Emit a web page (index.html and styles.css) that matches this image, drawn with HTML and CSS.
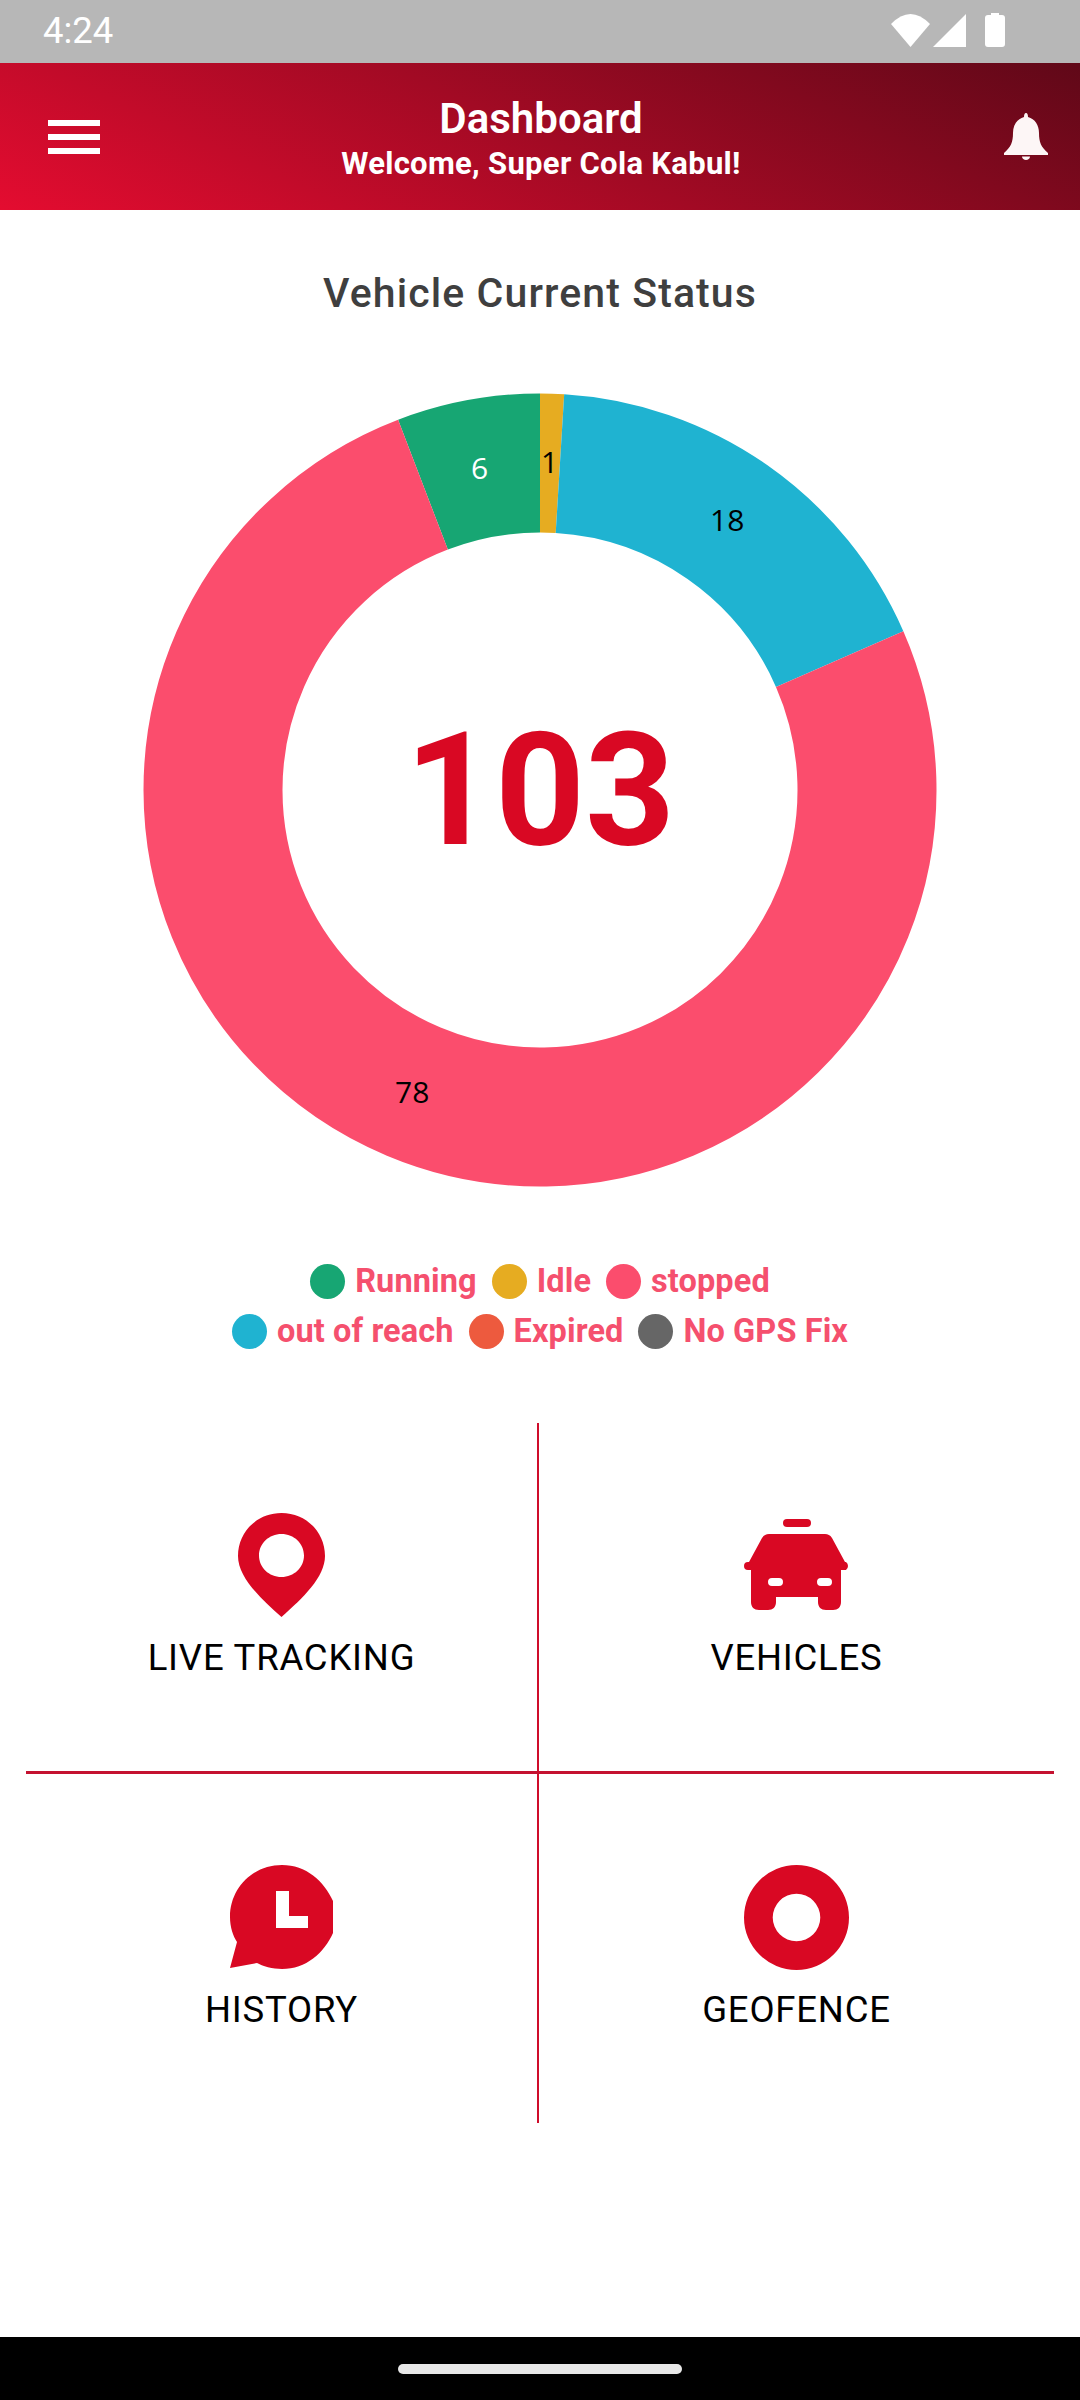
FILE: index.html
```html
<!DOCTYPE html>
<html lang="en">
<head>
  <meta charset="UTF-8" />
  <meta name="viewport" content="width=device-width, initial-scale=1.0" />
  <title>Dashboard</title>
  <link rel="stylesheet" href="styles.css">
</head>
<body>
  <div class="status-bar">
    <span class="status-time">4:24</span>
    <svg class="status-icons" width="75" height="33" viewBox="0 0 75 33">
      <path d="M0 10Q19.500-10 39 10L19.500 33z" fill="#fff"/>
      <path d="M42 33 75 0V33z" fill="#fff"/>
    </svg>
    <svg class="status-battery" width="20" height="34" viewBox="0 0 20 34">
      <path d="M6 0h8v2h3a3 3 0 0 1 3 3v26a3 3 0 0 1-3 3H3a3 3 0 0 1-3-3V5a3 3 0 0 1 3-3h3z" fill="#fff"/>
    </svg>
  </div>

  <header class="app-header">
    <div class="menu-icon"><span></span><span></span><span></span></div>
    <div class="header-texts">
      <h1>Dashboard</h1>
      <p>Welcome, Super Cola Kabul!</p>
    </div>
    <svg class="bell-icon" width="44" height="47" viewBox="0 0 44 47">
      <path d="M22 0c1.500 0 2 2 2 4 7 2 11 8 11 16 0 9 2 14 9 20v2H0v-2c7-6 9-11 9-20C9 12 13 6 20 4c0-2 .5-4 2-4z" fill="#fdf6f6"/>
      <path d="M18 43.500h8c0 2-2 3.500-4 3.500s-4-1.500-4-3.500z" fill="#fdf6f6"/>
    </svg>
  </header>

  <main class="content">
    <h2 class="chart-title">Vehicle Current Status</h2>

    <div class="chart">
      <svg width="794" height="794" viewBox="0 0 794 794">
        <g fill="none" stroke-width="139">
          <path stroke="#17a673" d="M279.970 91.660A327 327 0 0 1 397 70"/>
          <path stroke="#e6ac21" d="M397 70A327 327 0 0 1 416.940 70.610"/>
          <path stroke="#1fb3d1" d="M416.940 70.610A327 327 0 0 1 696.660 266.100"/>
          <path stroke="#fb4d6d" d="M696.660 266.100A327 327 0 1 1 279.970 91.660"/>
        </g>
      </svg>
      <span class="chart-total">103</span>
      <span class="slice-label label-green">6</span>
      <span class="slice-label label-yellow">1</span>
      <span class="slice-label label-blue">18</span>
      <span class="slice-label label-pink">78</span>
    </div>

    <div class="legend">
      <div class="legend-row">
        <div class="legend-item"><i class="dot dot-running"></i>Running</div>
        <div class="legend-item"><i class="dot dot-idle"></i>Idle</div>
        <div class="legend-item"><i class="dot dot-stopped"></i>stopped</div>
      </div>
      <div class="legend-row">
        <div class="legend-item"><i class="dot dot-reach"></i>out of reach</div>
        <div class="legend-item"><i class="dot dot-expired"></i>Expired</div>
        <div class="legend-item"><i class="dot dot-nogps"></i>No GPS Fix</div>
      </div>
    </div>

    <div class="menu-grid">
      <div class="menu-cell cell-tl">
        <div class="cell-icon">
          <svg width="90" height="106" viewBox="0 0 90 106">
            <path fill-rule="evenodd" d="M44.500 1C69 1 88 20 88 44c0 21-22 42-43.500 61C23 86 1 65 1 44 1 20 20 1 44.500 1zm0 21C32 22 22 31.500 22 43.500S32 65 44.500 65 67 55.500 67 43.500 57 22 44.500 22z" fill="#d90823"/>
          </svg>
        </div>
        <span>LIVE TRACKING</span>
      </div>
      <div class="menu-cell cell-tr">
        <div class="cell-icon">
          <svg width="106" height="92" viewBox="0 0 106 92">
            <rect x="39" y="0" width="28" height="8" rx="4" fill="#d90823"/>
            <path fill-rule="evenodd" d="M25 15h56c3 0 5 1 7 4l13 24h1a5 5 0 0 1 0 8h-5v32c0 5-3 8-8 8H82c-5 0-8-3-8-8V78H32v5c0 5-3 8-8 8H15c-5 0-8-3-8-8V51H4a4 4 0 0 1 0-8h1l13-24c2-3 4-4 7-4zM28 59a4 4 0 0 0 0 8h7a4 4 0 0 0 0-8zm49 0a4 4 0 0 0 0 8h7a4 4 0 0 0 0-8z" fill="#d90823"/>
          </svg>
        </div>
        <span>VEHICLES</span>
      </div>
      <div class="menu-cell cell-bl">
        <div class="cell-icon">
          <svg width="103" height="104" viewBox="0 0 103 104">
            <path fill-rule="evenodd" d="M52 0c24 0 42 16 51 36v32c-9 20-27 36-51 36-9 0-20-3-25-6L0 103l7-26C3 71 0 62 0 52 0 23 23 0 52 0zM46 26v37h32V51H59V26z" fill="#d90823"/>
          </svg>
        </div>
        <span>HISTORY</span>
      </div>
      <div class="menu-cell cell-br">
        <div class="cell-icon">
          <svg width="105" height="105" viewBox="0 0 106 106">
            <path fill-rule="evenodd" d="M53 0a53 53 0 1 1 0 106A53 53 0 0 1 53 0zm0 29a24 24 0 1 0 0 48 24 24 0 0 0 0-48z" fill="#d90823"/>
          </svg>
        </div>
        <span>GEOFENCE</span>
      </div>
    </div>
  </main>

  <div class="nav-bar"><div class="nav-pill"></div></div>
</body>
</html>
```

FILE: styles.css
```css
* {
  margin: 0;
  padding: 0;
  box-sizing: border-box;
}
html, body {
  width: 1080px;
  height: 2400px;
  overflow: hidden;
  background: white;
  font-family: Roboto, "Liberation Sans", sans-serif;
}
body {
  display: flex;
  flex-direction: column;
}
.status-bar {
  height: 63px;
  background: #b7b7b7;
  display: flex;
  align-items: center;
  padding: 0 75px 3px 43px;
  color: white;
}
.status-time {
  font-size: 36.500px;
  margin-right: auto;
}
.status-icons {
  margin-right: 19px;
}
.app-header {
  height: 147px;
  background: linear-gradient(25deg, #e40c30 0%, #600818 100%);
  display: flex;
  align-items: center;
  justify-content: space-between;
  padding: 0 32px 0 48px;
  color: white;
}
.menu-icon {
  width: 52px;
  display: flex;
  flex-direction: column;
  gap: 8px;
}
.menu-icon span {
  display: block;
  height: 6px;
  background: #fff;
}
.header-texts {
  flex: 1;
  text-align: center;
  padding: 3px 22px 0 0;
}
.header-texts h1 {
  font-size: 42px;
  font-weight: 600;
  line-height: 50px;
}
.header-texts p {
  font-size: 31px;
  font-weight: 700;
  letter-spacing: 0.300px;
  line-height: 38px;
  margin-top: 1px;
}
.bell-icon {
  display: block;
}
.content {
  flex: 1;
  display: flex;
  flex-direction: column;
  align-items: center;
}
.chart-title {
  margin-top: 59px;
  font-size: 41px;
  font-weight: 500;
  letter-spacing: 1.100px;
  line-height: 48px;
  color: #3f3f3f;
}
.chart {
  position: relative;
  width: 794px;
  height: 794px;
  margin-top: 76px;
}
.chart svg {
  display: block;
}
.chart-total {
  position: absolute;
  left: 0;
  right: 0;
  top: 311px;
  text-align: center;
  font-size: 157px;
  font-weight: 700;
  line-height: 172px;
  color: #d90823;
}
.slice-label {
  position: absolute;
  font-family: "Open Sans", sans-serif;
  font-size: 30px;
  line-height: 34px;
  color: #000;
}
.label-green {
  left: 328px;
  top: 58px;
  color: #fff;
}
.label-yellow {
  left: 398px;
  top: 52px;
}
.label-blue {
  left: 567px;
  top: 110px;
}
.label-pink {
  left: 252px;
  top: 682px;
}
.legend {
  margin-top: 77px;
  display: flex;
  flex-direction: column;
  gap: 15px;
}
.legend-row {
  display: flex;
  justify-content: center;
  gap: 15px;
}
.legend-item {
  display: flex;
  align-items: center;
  gap: 10px;
  font-size: 32.500px;
  font-weight: 700;
  letter-spacing: 0.100px;
  line-height: 35px;
  color: #f5506e;
}
.dot {
  display: block;
  width: 35px;
  height: 35px;
  border-radius: 50%;
}
.dot-running { background: #17a673; }
.dot-idle { background: #e6ac21; }
.dot-stopped { background: #fb4d6d; }
.dot-reach { background: #1fb3d1; }
.dot-expired { background: #ed5a3e; }
.dot-nogps { background: #666666; }
.menu-grid {
  margin-top: 74px;
  width: 1028px;
  display: grid;
  grid-template-columns: 513px 515px;
  grid-template-rows: 351px 349px;
}
.menu-cell {
  display: flex;
  flex-direction: column;
  align-items: center;
  gap: 19px;
  padding-top: 89px;
  font-size: 36.500px;
  letter-spacing: 0.800px;
  line-height: 42px;
  color: #000;
}
.cell-icon {
  height: 106px;
  display: flex;
  align-items: center;
}
.cell-icon svg {
  display: block;
}
.cell-tl, .cell-bl {
  border-right: 2px solid #cf0d2b;
}
.cell-tl, .cell-tr {
  border-bottom: 3px solid #c41230;
}
.cell-bl, .cell-br {
  padding-top: 90px;
}
.nav-bar {
  height: 63px;
  background: #000;
  display: flex;
  align-items: center;
  justify-content: center;
}
.nav-pill {
  width: 284px;
  height: 10px;
  border-radius: 5px;
  background: #e8e8e8;
}
```
